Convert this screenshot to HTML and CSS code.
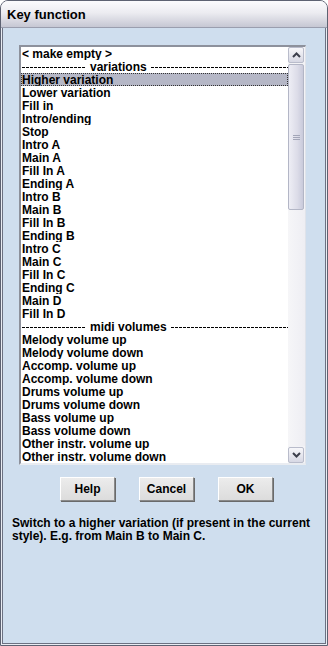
FILE: index.html
```html
<!DOCTYPE html>
<html lang="en">
<head>
  <meta charset="UTF-8" />
  <title>Key function</title>
  <link rel="stylesheet" href="styles.css">
</head>
<body>

  <div class="window">
    <div class="titlebar">Key function</div>
    <div class="frame">
      <div class="client">

        <div class="listbox">
          <div class="items" id="items"></div>
          <div class="scrollbar">
            <div class="sb-btn">
              <svg width="9" height="6" viewBox="0 0 9 6"><polyline points="1,5 4.5,1.5 8,5" fill="none" stroke="#3c3f4c" stroke-width="2"/></svg>
            </div>
            <div class="sb-thumb"><span class="grip"></span></div>
            <div class="sb-track"></div>
            <div class="sb-btn">
              <svg width="9" height="6" viewBox="0 0 9 6"><polyline points="1,1 4.5,4.5 8,1" fill="none" stroke="#3c3f4c" stroke-width="2"/></svg>
            </div>
          </div>
        </div>

        <div class="buttons">
          <button>Help</button>
          <button>Cancel</button>
          <button>OK</button>
        </div>

        <p class="info">Switch to a higher variation (if present in the current style). E.g. from Main B to Main C.</p>

      </div>
    </div>
  </div>

  <script>
    const items = [
      "< make empty >",
      "-variations",
      "Higher variation",
      "Lower variation",
      "Fill in",
      "Intro/ending",
      "Stop",
      "Intro A", "Main A", "Fill In A", "Ending A",
      "Intro B", "Main B", "Fill In B", "Ending B",
      "Intro C", "Main C", "Fill In C", "Ending C",
      "Main D", "Fill In D",
      "-midi volumes",
      "Melody volume up", "Melody volume down",
      "Accomp. volume up", "Accomp. volume down",
      "Drums volume up", "Drums volume down",
      "Bass volume up", "Bass volume down",
      "Other instr. volume up", "Other instr. volume down"
    ];

    const list = document.getElementById("items");
    items.forEach((text, i) => {
      const div = document.createElement("div");
      div.className = "item";
      if (text.startsWith("-")) {
        div.className += " sep";
        div.innerHTML = `<span class="dash lead"></span><span>${text.slice(1)}</span><span class="dash"></span>`;
      } else {
        div.textContent = text;
      }
      if (i === 2) div.className += " selected";
      list.appendChild(div);
    });
  </script>

</body>
</html>
```

FILE: styles.css
```css
body {
  margin: 0;
  padding: 0;
  background: #ffffff;
  font-family: "Liberation Sans", Arial, sans-serif;
}

.window {
  width: 328px;
  height: 646px;
  box-sizing: border-box;
  border: 1px solid #5d6272;
  border-radius: 8px 8px 0 0;
  overflow: hidden;
  display: flex;
  flex-direction: column;
  background: #e9ecf3;
}

.titlebar {
  height: 26px;
  line-height: 28px;
  padding-left: 6px;
  font-size: 13px;
  font-weight: bold;
  color: #000;
  background: linear-gradient(#fbfbfd, #ececf1 45%, #c6c7d3);
  border-bottom: 1px solid #9a9eae;
}

.frame {
  flex: 1;
  padding: 0 1px 1px 1px;
  display: flex;
}

.client {
  flex: 1;
  border: 1px solid #6c7182;
  border-top: none;
  background: #cfdeee;
  padding: 17px 0 0 16px;
}

.listbox {
  width: 287px;
  height: 420px;
  box-sizing: border-box;
  display: flex;
  background: #fff;
  border-top: 2px solid #8d919c;
  border-left: 2px solid #8d919c;
  border-right: 1px solid #dfe3ea;
  border-bottom: 2px solid #e9ecf1;
}

.items {
  width: 267px;
  overflow: hidden;
}

.item {
  height: 12px;
  padding-top: 1px;
  line-height: 13px;
  font-size: 12px;
  font-weight: bold;
  padding-left: 1px;
  white-space: nowrap;
  overflow: hidden;
  color: #000;
}

.item.sep {
  display: flex;
  align-items: center;
  gap: 4px;
}

.dash {
  flex: 1;
  height: 1px;
  margin-top: 1px;
  background: repeating-linear-gradient(90deg, #000 0 3px, transparent 3px 4px);
}

.dash.lead {
  flex: none;
  width: 64px;
}

.item.selected {
  background: #b5b7c6;
  outline: 1px dotted #333;
  outline-offset: -1px;
}

.scrollbar {
  width: 17px;
  display: flex;
  flex-direction: column;
  background: #f3f3f6;
}

.sb-btn {
  height: 16px;
  margin: 0 1px 1px 0;
  box-sizing: border-box;
  border: 1px solid #b9bccb;
  border-radius: 2px;
  background: linear-gradient(#f7f7fa, #d7d8e4);
  display: flex;
  align-items: center;
  justify-content: center;
}

.sb-btn:last-child {
  margin: 1px 1px 0 0;
}

.sb-thumb {
  height: 146px;
  margin-right: 1px;
  box-sizing: border-box;
  border: 1px solid #b3b6c6;
  border-radius: 2px;
  background: linear-gradient(90deg, #eeeef5, #dcdce8 60%, #c9cadb);
  display: flex;
  align-items: center;
  justify-content: center;
}

.grip {
  width: 7px;
  height: 5px;
  background: repeating-linear-gradient(#a3a6b8 0 1px, transparent 1px 2px);
}

.sb-track {
  flex: 1;
  background: linear-gradient(90deg, #f6f6f8, #eeeef3);
}

.buttons {
  display: flex;
  gap: 24px;
  padding: 12px 0 0 41px;
}

.buttons button {
  width: 55px;
  height: 24px;
  font-family: "Liberation Sans", Arial, sans-serif;
  font-size: 12px;
  font-weight: bold;
  color: #000;
  background: linear-gradient(#ececec, #dcdcdc);
  border: 1px solid;
  border-color: #ffffff #8a8a8a #8a8a8a #ffffff;
  box-shadow: 1px 1px 0 #6a6a6a;
  padding: 0;
}

.info {
  margin: 16px 0 0 -7px;
  padding-right: 6px;
  font-size: 12px;
  font-weight: bold;
  line-height: 13px;
  color: #000;
}
```
